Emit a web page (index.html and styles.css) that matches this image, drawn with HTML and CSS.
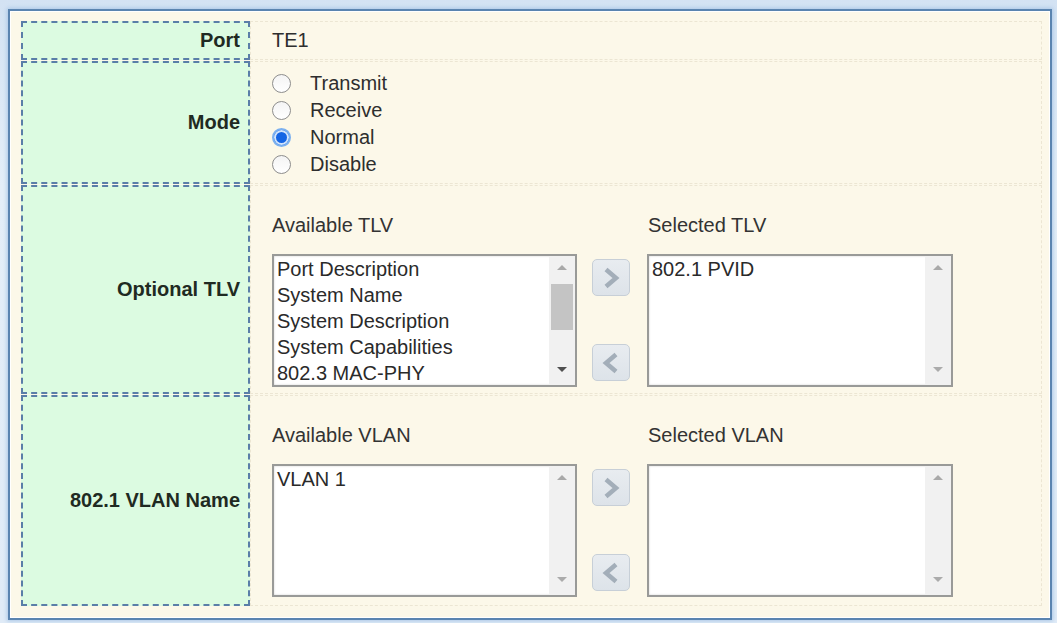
FILE: index.html
```html
<!DOCTYPE html>
<html lang="en">
<head>
<meta charset="utf-8">
<title>LLDP Port Setting</title>
<link rel="stylesheet" href="styles.css">
</head>
<body>
<div class="frame">
  <div class="form">
    <div class="label">Port</div>
    <div class="value port">TE1</div>

    <div class="label">Mode</div>
    <div class="value mode">
      <div class="radios">
        <div class="radio"><span class="dot"></span>Transmit</div>
        <div class="radio"><span class="dot"></span>Receive</div>
        <div class="radio"><span class="dot checked"></span>Normal</div>
        <div class="radio"><span class="dot"></span>Disable</div>
      </div>
    </div>

    <div class="label">Optional TLV</div>
    <div class="value">
      <div class="transfer">
        <div class="cap">Available TLV</div>
        <div class="cap cap-right">Selected TLV</div>
        <div class="listbox">
          <div class="opts">
            <div>Port Description</div>
            <div>System Name</div>
            <div>System Description</div>
            <div>System Capabilities</div>
            <div>802.3 MAC-PHY</div>
          </div>
          <div class="sbar">
            <span class="arr up"></span>
            <span class="thumb"></span>
            <span class="fill"></span>
            <span class="arr down dark"></span>
          </div>
        </div>
        <div class="moves">
          <button class="mv" type="button"><svg viewBox="0 0 20 22" width="20" height="22"><path d="M5 2.5 L15 11 L5 19.5" fill="none" stroke="#a3aeb9" stroke-width="4.5"/></svg></button>
          <button class="mv" type="button"><svg viewBox="0 0 20 22" width="20" height="22"><path d="M15 2.5 L5 11 L15 19.5" fill="none" stroke="#a3aeb9" stroke-width="4.5"/></svg></button>
        </div>
        <div class="listbox">
          <div class="opts">
            <div>802.1 PVID</div>
          </div>
          <div class="sbar">
            <span class="arr up"></span>
            <span class="fill"></span>
            <span class="arr down"></span>
          </div>
        </div>
      </div>
    </div>

    <div class="label">802.1 VLAN Name</div>
    <div class="value">
      <div class="transfer">
        <div class="cap">Available VLAN</div>
        <div class="cap cap-right">Selected VLAN</div>
        <div class="listbox">
          <div class="opts">
            <div>VLAN 1</div>
          </div>
          <div class="sbar">
            <span class="arr up"></span>
            <span class="fill"></span>
            <span class="arr down"></span>
          </div>
        </div>
        <div class="moves">
          <button class="mv" type="button"><svg viewBox="0 0 20 22" width="20" height="22"><path d="M5 2.5 L15 11 L5 19.5" fill="none" stroke="#a3aeb9" stroke-width="4.5"/></svg></button>
          <button class="mv" type="button"><svg viewBox="0 0 20 22" width="20" height="22"><path d="M15 2.5 L5 11 L15 19.5" fill="none" stroke="#a3aeb9" stroke-width="4.5"/></svg></button>
        </div>
        <div class="listbox">
          <div class="opts"></div>
          <div class="sbar">
            <span class="arr up"></span>
            <span class="fill"></span>
            <span class="arr down"></span>
          </div>
        </div>
      </div>
    </div>
  </div>
</div>
</body>
</html>
```

FILE: styles.css
```css
* {
  box-sizing: border-box;
}

html, body {
  height: 100%;
}

body {
  margin: 0;
  padding: 9px 5px 3px 8px;
  background: linear-gradient(#d3e2f3, #e4eef8 30%, #e0ebf7);
  font-family: "Liberation Sans", Arial, sans-serif;
  font-size: 20px;
  color: #333;
  overflow: hidden;
}

/* window frame */
.frame {
  height: 611px;
  border: 2px solid #5a84b0;
  box-shadow: 0 0 4px 1px #a9c7e6, inset 0 0 0 1px #ffffff;
  background: #fcf8e9;
  padding: 10px 8px 11px 11px;
}

.form {
  display: grid;
  grid-template-columns: 229px 1fr;
  grid-template-rows: 39px 123px 209px 211px;
  row-gap: 1px;
  height: 100%;
}

/* left caption cells */
.label {
  display: flex;
  align-items: center;
  justify-content: flex-end;
  padding-right: 8px;
  background: #dcfbe1;
  border: 2px dashed #5a7ea8;
  font-weight: bold;
  color: #1f2a22;
}

/* right value cells */
.value {
  border: 1px dashed #ece6d3;
  padding-left: 21px;
  color: #2e2e2e;
}

.port {
  display: flex;
  align-items: center;
}

.mode {
  display: flex;
  align-items: center;
}

.radios {
  display: flex;
  flex-direction: column;
  margin-top: 2px;
}

.radio {
  display: flex;
  align-items: center;
  height: 27px;
  line-height: 27px;
}

.dot {
  width: 19px;
  height: 19px;
  margin-right: 19px;
  border-radius: 50%;
  border: 1.5px solid #8d8d8d;
  background: linear-gradient(#f4f4f4, #ffffff);
}

.dot.checked {
  border: 2px solid #7bb0ef;
  background: #1565e4;
  box-shadow: inset 0 0 0 2px #d2e4fb;
}

/* dual list transfer widget */
.transfer {
  display: grid;
  grid-template-columns: 305px 40px 306px;
  grid-template-rows: 23px 133px;
  column-gap: 15px;
  row-gap: 17px;
  padding-top: 28px;
}

.cap {
  line-height: 23px;
  color: #333;
}

.cap-right {
  grid-column: 3;
  padding-left: 1px;
}

.listbox {
  grid-row: 2;
  display: flex;
  background: #ffffff;
  border: 2px solid #999a98;
  box-shadow: inset 0 0 2px #c9c9c9;
}

.opts {
  flex: 1;
  padding: 0 3px;
  line-height: 26px;
  color: #2a2a2a;
  white-space: nowrap;
  overflow: hidden;
}

.sbar {
  width: 26px;
  display: flex;
  flex-direction: column;
  align-items: center;
  background: #f1f1f1;
}

.sbar .fill {
  flex: 1;
}

.arr {
  width: 0;
  height: 0;
  border-left: 5px solid transparent;
  border-right: 5px solid transparent;
}

.arr.up {
  margin-top: 9px;
  border-bottom: 5px solid #a9a9a9;
}

.arr.down {
  margin-bottom: 13px;
  border-top: 5px solid #ababab;
}

.arr.down.dark {
  border-top-color: #505050;
}

.thumb {
  width: 22px;
  height: 46px;
  margin-top: 14px;
  background: #c4c4c4;
}

.moves {
  grid-row: 2;
  grid-column: 2;
  display: flex;
  flex-direction: column;
  justify-content: space-between;
  padding: 5px 0 6px;
}

.mv {
  width: 38px;
  height: 37px;
  padding: 0;
  display: flex;
  align-items: center;
  justify-content: center;
  background: linear-gradient(#e8ecf0, #dde3e9);
  border: 1px solid #c7cfd7;
  border-radius: 5px;
}
```
